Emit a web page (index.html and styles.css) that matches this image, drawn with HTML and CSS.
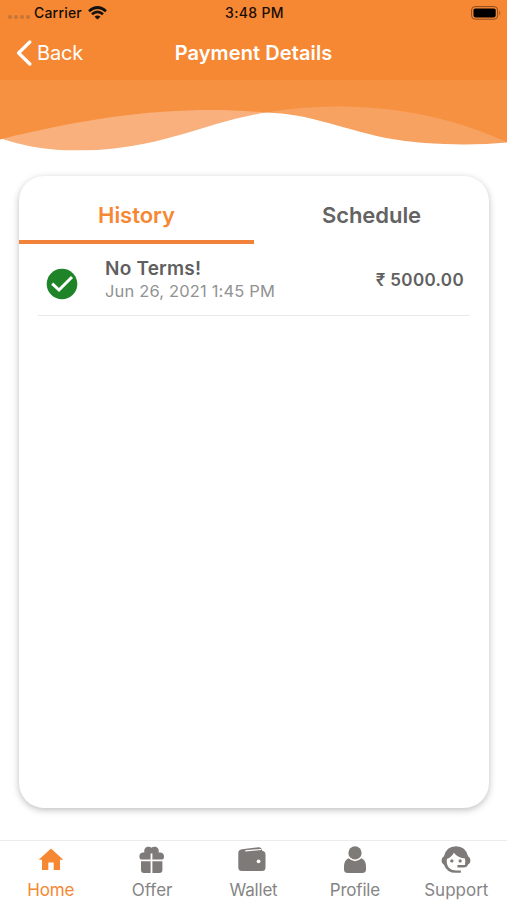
FILE: index.html
```html
<!DOCTYPE html>
<html lang="en">
<head>
<meta charset="utf-8">
<title>Payment Details</title>
<link rel="stylesheet" href="styles.css">
</head>
<body>
<div class="screen">
  <header class="top">
    <div class="status">
      <div class="carrier">
        <span class="dots"><i></i><i></i><i></i><i></i></span>
        <span class="carrier-name">Carrier</span>
        <svg class="wifi" width="19" height="14" viewBox="0 0 19 14"><g fill="none" stroke="#111" stroke-width="2.7"><path d="M1 5.2Q9.5-2.2 18 5.2"/><path d="M4 8.3Q9.5 3.6 15 8.3"/></g><path d="M9.5 13.6L6.5 10.7Q9.5 8.4 12.5 10.7Z" fill="#111"/></svg>
      </div>
      <span class="time">3:48 PM</span>
      <svg class="battery" width="30" height="14" viewBox="0 0 30 14"><rect x=".6" y=".6" width="26" height="12.6" rx="3.4" fill="none" stroke="#8a4b20" stroke-width="1"/><rect x="2.5" y="2.4" width="22.2" height="9" rx="1.8" fill="#000"/><path d="M28.2 4.6Q30.6 6.9 28.2 9.2Z" fill="#a65c29"/></svg>
    </div>
    <nav class="navbar">
      <a class="back"><svg width="17" height="26" viewBox="0 0 17 26"><path d="M14.8 2L3.6 13L14.8 24" fill="none" stroke="#fff" stroke-width="3.3" stroke-linecap="round" stroke-linejoin="round"/></svg><span>Back</span></a>
      <h1>Payment Details</h1>
      <span></span>
    </nav>
  </header>
  <svg class="wave" width="507" height="74" viewBox="0 0 507 74">
    <path fill="#f9b07c" d="M0 58C35 70 60 70.5 84 70.3C160 69.5 205 42 266 32.5V20L150 25L0 45Z"/>
    <path fill="#f7a261" d="M266 32.5V10H507V62.5C470 66 425 65 386 58C335 47 310 34 266 32.5Z"/>
    <path fill="#f59141" d="M0 0H507V62C445 34 385 26 333 26.5C305 27 285 29 266 32.5C190 26 110 32 0 59.5Z"/>
  </svg>
  <main class="card">
    <div class="tabs">
      <div class="tab active"><span>History</span></div>
      <div class="tab"><span>Schedule</span></div>
    </div>
    <div class="row">
      <svg class="check" width="32" height="32" viewBox="0 0 32 32"><circle cx="16" cy="16" r="15.3" fill="#1e8427"/><path d="M6.2 15.7L13 22L26 9" fill="none" stroke="#fff" stroke-width="3"/></svg>
      <div class="info"><strong>No Terms!</strong><time>Jun 26, 2021 1:45 PM</time></div>
      <span class="amount">₹ 5000.00</span>
    </div>
  </main>
  <footer class="tabbar">
    <a class="item home"><svg width="26" height="28" viewBox="0 0 26 28"><path d="M13 2.5L.7 13.8H4V24H10.3V16.5H15.7V24H22V13.8H25.3Z" fill="currentColor"/></svg><span class="l-home">Home</span></a>
    <a class="item"><svg width="26" height="28" viewBox="0 0 26 28"><g fill="currentColor"><path d="M11.6 13.6H3.3Q.4 13.6.4 10.4Q.4 7.2 3.5 6.5H5.3Q4.7 1.8 8.4.8Q11 .2 12.5 1.8Q14 .2 16.6.8Q20.3 1.8 19.7 6.5H21.5Q25 7.2 25 10.4Q25 13.6 22.1 13.6H13.4V7.5H11.6Z"/><path d="M2 15.2H11.6V27H5Q2 27 2 24ZM13.4 15.2H23.4V24Q23.4 27 20.4 27H13.4Z"/></g></svg><span class="l-offer">Offer</span></a>
    <a class="item"><svg class="wallet" width="28" height="28" viewBox="0 0 28 28"><path d="M4 3.3L20.5 1.3Q23.6 1.1 24.2 4.8Q27.5 5.2 27.5 8.5V21.5Q27.5 25 24 25H4Q.3 25 .3 21.5V7Q.3 4 4 3.3Z" fill="currentColor"/><path d="M7.2 4.8L23.3 3.5" stroke="#fff" stroke-width="1.2"/><circle cx="20.6" cy="15.3" r="1.9" fill="#fff"/></svg><span class="l-wallet">Wallet</span></a>
    <a class="item"><svg width="24" height="28" viewBox="0 0 24 28"><g fill="currentColor"><circle cx="12" cy="6.9" r="6.6"/><path d="M5.6 12.3Q12 18.1 18.4 12.3Q23 14 23 21V23.5Q23 27.1 19 27.1H5Q1 27.1 1 23.5V21Q1 14 5.6 12.3Z"/></g></svg><span class="l-profile">Profile</span></a>
    <a class="item"><svg width="32" height="29" viewBox="0 0 32 29"><path d="M3.5 10.7Q6 .2 16 .2T28.5 10.7Q31 12 31 15T28.5 19.2Q27.5 22.3 24 22.3H17.5V19.8H25.2Q26 16.5 25.3 13Q18 12.5 13.8 7Q11.5 11.5 6.5 13.5Q5.5 25.3 16.5 25.3H21V27.8H16Q6.5 27.8 3.5 19.3Q1 18 1 15T3.5 10.7Z" fill="currentColor"/><circle cx="11.7" cy="15.5" r="1.7" fill="currentColor"/><circle cx="20.3" cy="15.5" r="1.7" fill="currentColor"/></svg><span class="l-support">Support</span></a>
  </footer>
</div>
</body>
</html>
```
FILE: styles.css
```css
* { box-sizing: border-box; }
body { margin: 0; background: #fff; font-family: Inter, "Liberation Sans", sans-serif; }
svg { display: block; flex: none; }
.screen { width: 507px; height: 900px; display: flex; flex-direction: column; overflow: hidden; }
.top { height: 80px; background: #f68733; }
.status { height: 26px; padding: 0 6px 0 8px; display: grid; grid-template-columns: 1fr auto 1fr; align-items: center; color: #160d06; font-size: 14px; font-weight: 500; line-height: 26px; }
.carrier { display: flex; align-items: center; }
.dots { display: flex; gap: 2px; margin: 8px 4px 0 0; }
.dots i { width: 4px; height: 4px; border-radius: 50%; background: #c57539; }
.carrier-name { width: 49px; letter-spacing: .2px; }
.wifi { margin-left: 5px; }
.time { letter-spacing: .35px; }
.battery { justify-self: end; }
.navbar { height: 54px; padding: 0 15px; display: grid; grid-template-columns: 1fr auto 1fr; align-items: center; color: #fff; line-height: 52px; }
.back { display: flex; align-items: center; gap: 5px; font-size: 20px; letter-spacing: -.2px; }
h1 { margin: 0; font-size: 20px; font-weight: 600; letter-spacing: .1px; }
.wave { height: 74px; }
.card { width: 470px; height: 632px; margin: 22px 0 0 19px; flex: none; border-radius: 25px; background: #fff; box-shadow: 0 2px 7px rgba(0,0,0,.26); }
.tabs { height: 68px; display: flex; }
.tab { flex: 1; border-bottom: 4px solid transparent; text-align: center; font-size: 22px; font-weight: 600; line-height: 78px; letter-spacing: -.05px; color: #636363; }
.tab.active { color: #f68733; border-color: #f08339; }
.row { height: 72px; margin: 0 19px; padding: 0 6px 0 8px; border-bottom: 1px solid #e9e9e9; display: flex; align-items: center; }
.check { margin-top: 9px; }
.info { flex: 1; margin: 0 0 0 27px; display: flex; flex-direction: column; }
.info strong { font-size: 19px; font-weight: 600; line-height: 22px; letter-spacing: .2px; color: #5f5f5f; }
.info time { font-size: 16.5px; line-height: 22px; letter-spacing: .16px; color: #929292; }
.amount { font-size: 17px; font-weight: 600; letter-spacing: .35px; color: #606060; }
.tabbar { height: 60px; margin-top: auto; border-top: 1px solid #ececec; display: grid; grid-template-columns: repeat(5, 1fr); color: #7d7a77; background: #fff; }
.item { display: flex; flex-direction: column; align-items: center; padding-top: 5px; }
.item svg { height: 28px; }
.item .wallet { margin-left: -3px; }
.item span { margin-top: 5px; font-size: 17px; line-height: 22px; color: #858585; }
.item .l-home, .item .l-wallet, .item .l-profile { letter-spacing: -.2px; }
.home, .item .l-home { color: #f68733; }
```
